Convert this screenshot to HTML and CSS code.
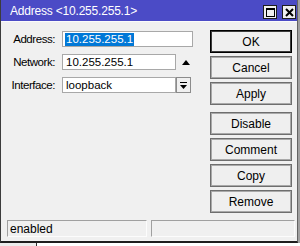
FILE: index.html
```html
<!DOCTYPE html>
<html>
<head>
<meta charset="utf-8">
<link rel="stylesheet" href="styles.css">
</head>
<body>
<div class="screen">
  <div class="window">
    <div class="titlebar">
      <span class="title">Address &lt;10.255.255.1&gt;</span>
      <div class="tb-buttons">
        <span class="tb-btn"><svg width="11" height="11" viewBox="0 0 11 11"><rect x="1.5" y="1.5" width="8" height="8" fill="none" stroke="#000" stroke-width="1"/><rect x="1" y="1" width="9" height="2" fill="#000"/></svg></span>
        <span class="tb-btn"><svg width="11" height="11" viewBox="0 0 11 11"><path d="M2 2 L9 9 M9 2 L2 9" stroke="#000" stroke-width="2"/></svg></span>
      </div>
    </div>
    <div class="body">
      <div class="form">
        <span class="label">Address:</span>
        <div class="field wide"><span class="selected">10.255.255.1</span></div>
        <span class="label">Network:</span>
        <div class="combo">
          <div class="field">10.255.255.1</div>
          <span class="arrow-up"></span>
        </div>
        <span class="label">Interface:</span>
        <div class="combo">
          <div class="field">loopback</div>
          <span class="dropbtn"><svg width="9" height="9" viewBox="0 0 9 9"><rect x="1" y="1" width="7" height="1" fill="#000"/><path d="M1 4 H8 L4.5 8 Z" fill="#000"/></svg></span>
        </div>
      </div>
      <div class="buttons">
        <div class="btn default">OK</div>
        <div class="btn">Cancel</div>
        <div class="btn">Apply</div>
        <div class="btn group">Disable</div>
        <div class="btn">Comment</div>
        <div class="btn">Copy</div>
        <div class="btn">Remove</div>
      </div>
    </div>
    <div class="status">
      <div class="panel first">enabled</div>
      <div class="panel second"></div>
    </div>
  </div>
  <div class="edge"></div>
</div>
<div class="under"><span class="under-a"></span><span class="under-b"></span></div>
</body>
</html>
```
FILE: styles.css
```css
html, body {
  margin: 0;
  padding: 0;
  background: #ffffff;
  font-family: "Liberation Sans", Arial, sans-serif;
  font-size: 11px;
  color: #000;
}

.screen {
  display: flex;
  width: 300px;
}

.window {
  width: 296px;
  height: 241px;
  border-left: 1px solid #3c3c3c;
  border-right: 1px solid #646464;
  border-bottom: 2px solid #1e1e1e;
  background: #f0f0f0;
  display: flex;
  flex-direction: column;
}

.edge {
  width: 2px;
  background: #a0a0a0;
}

.titlebar {
  height: 21px;
  background: #4b4bc6;
  display: flex;
  align-items: center;
  justify-content: space-between;
  padding-left: 9px;
  padding-right: 1px;
  box-sizing: border-box;
  flex-shrink: 0;
}

.title {
  color: #fff;
  font-size: 12px;
  letter-spacing: -0.2px;
  margin-top: 1px;
}

.tb-buttons {
  display: flex;
  gap: 5px;
  margin-top: 3px;
}

.tb-btn {
  width: 12px;
  height: 12px;
  background: #f0f0f0;
  border: 1px solid #1e1e1e;
  display: flex;
  align-items: center;
  justify-content: center;
}

.tb-btn svg { display: block; }

.body {
  flex: 1;
  display: flex;
  padding-top: 8px;
  box-sizing: border-box;
  border-top: 1px solid #fbfbfb;
}

.form {
  display: grid;
  grid-template-columns: 56px 131px;
  column-gap: 5px;
  row-gap: 7px;
  align-content: start;
  margin-top: 1px;
  width: 192px;
}

.label {
  text-align: right;
  height: 16px;
  line-height: 16px;
  font-size: 11.5px;
  letter-spacing: -0.45px;
  padding-right: 2px;
}

.field {
  height: 16px;
  box-sizing: border-box;
  border: 1px solid #a8a8a8;
  background: #fff;
  line-height: 14px;
  padding-left: 3px;
  font-size: 11.5px;
}

.selected {
  display: inline-block;
  background: #0078d7;
  color: #fff;
  line-height: 13px;
  margin-left: -1px;
  padding: 0 1px;
}

.combo {
  display: flex;
  align-items: center;
}

.combo .field {
  width: 114px;
}

.arrow-up {
  width: 0;
  height: 0;
  border-left: 4px solid transparent;
  border-right: 4px solid transparent;
  border-bottom: 5px solid #000;
  margin-left: 6px;
}

.dropbtn {
  width: 15px;
  height: 16px;
  box-sizing: border-box;
  border: 1px solid #8c8c8c;
  background: #f0f0f0;
  display: flex;
  align-items: center;
  justify-content: center;
}

.buttons {
  margin-left: 17px;
  width: 82px;
  display: flex;
  flex-direction: column;
  gap: 3px;
}

.btn {
  height: 23px;
  box-sizing: border-box;
  border: 1px solid #6e6e6e;
  box-shadow: inset 0 0 0 1px #a9a9a9;
  background: #efefef;
  display: flex;
  align-items: center;
  justify-content: center;
  font-size: 12px;
}

.btn.default {
  border: 1px solid #000;
  box-shadow: inset 0 0 0 1px #3c3c3c;
}

.btn.group {
  margin-top: 4px;
}

.status {
  height: 21px;
  flex-shrink: 0;
  display: flex;
  gap: 4px;
  padding-left: 6px;
  box-sizing: border-box;
}

.panel {
  height: 17px;
  box-sizing: border-box;
  border-top: 1px solid #a0a0a0;
  border-left: 1px solid #a0a0a0;
  border-right: 1px solid #fcfcfc;
  border-bottom: 1px solid #fcfcfc;
  padding-left: 2px;
  line-height: 16px;
  font-size: 12px;
}

.panel.first { width: 140px; }
.panel.second { width: 144px; }

.under {
  height: 3px;
  display: flex;
}

.under-a {
  width: 36px;
  background: #ececec;
  border-right: 1px solid #303030;
}

.under-b {
  flex: 1;
  background: #fff;
}
```
